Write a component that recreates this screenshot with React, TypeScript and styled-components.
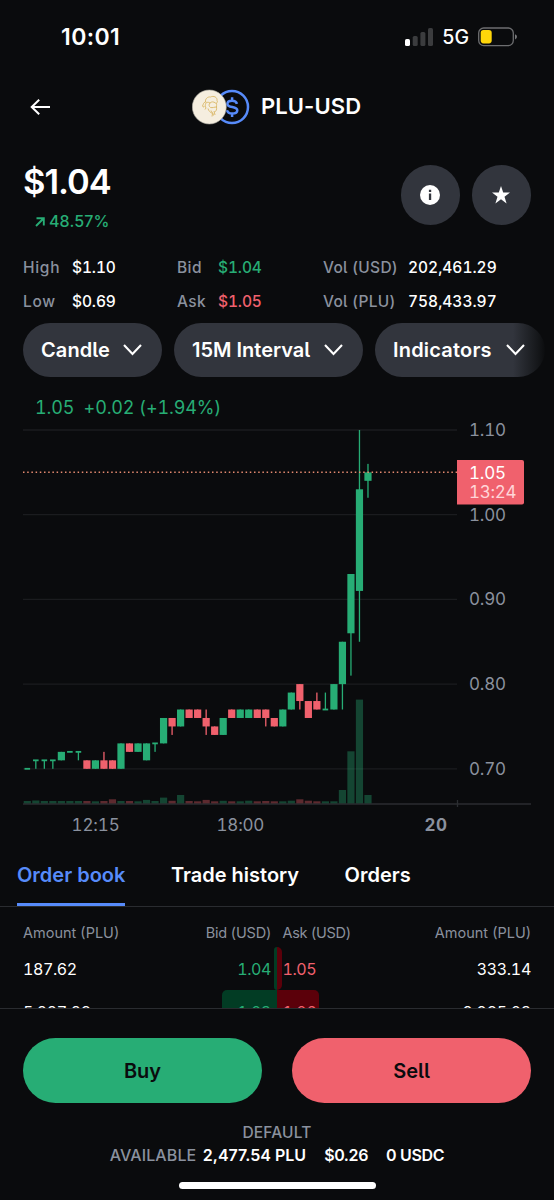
import React from "react";
import styled, { createGlobalStyle } from "styled-components";

const c = {
  bg: "#0a0b0d",
  fg: "#ffffff",
  muted: "#8a919e",
  green: "#27ad75",
  red: "#f0616d",
  blue: "#578bfa",
  pill: "#32353d",
  divider: "#2a2c30",
};

const Global = createGlobalStyle`
  * { box-sizing: border-box; }
  body { margin: 0; background: ${c.bg}; }
  button { border: 0; padding: 0; font: inherit; color: inherit; background: none; }
`;

const Screen = styled.main`
  width: 554px;
  height: 1200px;
  overflow: hidden;
  display: flex;
  flex-direction: column;
  background: ${c.bg};
  color: ${c.fg};
  font-family: Inter, "Liberation Sans", sans-serif;
  font-feature-settings: "cv05";
`;

const Text = styled.span<{ $size: number; $weight?: number; $color?: string; $ls?: number; $tabular?: boolean }>`
  font-size: ${(p) => p.$size}px;
  font-weight: ${(p) => p.$weight ?? 500};
  color: ${(p) => p.$color ?? c.fg};
  letter-spacing: ${(p) => p.$ls ?? 0}px;
  font-variant-numeric: ${(p) => (p.$tabular ? "tabular-nums" : "normal")};
  line-height: 1.2;
  white-space: pre;
`;

const StatusBar = styled.div`
  height: 75px;
  padding: 0 37px 0 61px;
  display: flex;
  align-items: center;
  justify-content: space-between;
`;

const StatusIcons = styled.div`
  display: flex;
  align-items: center;
  gap: 9px;
`;

const Header = styled.header`
  height: 65px;
  padding: 0 29px 2px;
  display: grid;
  grid-template-columns: 163px auto 1fr;
  align-items: center;
`;

const BackButton = styled.button`
  width: 22px;
  height: 18px;
`;

const Pair = styled.div`
  display: flex;
  align-items: center;
  gap: 11px;
`;

const PriceSection = styled.section`
  height: 110px;
  padding: 25px 23px 0;
  display: flex;
  justify-content: space-between;
`;

const PriceColumn = styled.div`
  display: flex;
  flex-direction: column;
  margin-top: -4px;
`;

const Change = styled.div`
  display: flex;
  align-items: center;
  gap: 4px;
  margin: 10px 0 0 12px;
`;

const Actions = styled.div`
  display: flex;
  gap: 11.5px;
`;

const RoundButton = styled.button`
  width: 59.5px;
  height: 59.5px;
  border-radius: 50%;
  background: ${c.pill};
  display: flex;
  align-items: center;
  justify-content: center;
`;

const Stats = styled.section`
  height: 73px;
  padding: 1px 23px 0;
  display: grid;
  grid-template-columns: 49px 105px 41px 105px 85px 1fr;
  grid-auto-rows: 34px;
  align-items: center;
`;

const Pills = styled.nav`
  height: 54px;
  margin-left: 23px;
  display: flex;
  gap: 12px;
`;

const Pill = styled.button<{ $width: number; $fade?: boolean }>`
  width: ${(p) => p.$width}px;
  flex: none;
  height: 54px;
  border-radius: 27px;
  padding: 0 20px 0 18px;
  display: flex;
  align-items: center;
  justify-content: space-between;
  background: ${(p) =>
    p.$fade ? `linear-gradient(to right, ${c.pill} 138px, #15171a 163px, ${c.bg} 171px)` : c.pill};
`;

const Legend = styled.div`
  height: 43px;
  padding: 20px 0 0 35px;
`;

const ChartSvg = styled.svg`
  display: block;
  flex: none;
  font-family: Inter, "Liberation Sans", sans-serif;
  font-variant-numeric: tabular-nums;
`;

const Tabs = styled.nav`
  height: 67px;
  flex: none;
  padding-left: 17px;
  display: flex;
  gap: 45.5px;
  border-bottom: 1px solid ${c.divider};
`;

const Tab = styled.button<{ $active?: boolean }>`
  height: 66px;
  padding-top: 6px;
  border-bottom: 3px solid ${(p) => (p.$active ? c.blue : "transparent")};
`;

const Book = styled.section`
  height: 101px;
  flex: none;
  overflow: hidden;
  padding-top: 12px;
`;

const BookRow = styled.div<{ $h: number }>`
  height: ${(p) => p.$h}px;
  padding: 0 23px;
  display: grid;
  grid-template-columns: 1fr 1fr;
`;

const Side = styled.div<{ $ask?: boolean }>`
  display: flex;
  align-items: center;
  justify-content: space-between;
  padding: ${(p) => (p.$ask ? "0 0 0 5.5px" : "0 6px 0 0")};
`;

/* The depth bar sits behind the row's figures, growing outward from the centre. */
const Depth = styled(Side)<{ $w: number }>`
  position: relative;
  z-index: 0;
  padding-top: 2px;
  &::before {
    content: "";
    position: absolute;
    z-index: -1;
    top: 0;
    bottom: 0;
    ${(p) => (p.$ask ? "left" : "right")}: 0;
    width: ${(p) => p.$w}px;
    background: ${(p) => (p.$ask ? "#5b000a" : "#023c24")};
    border-radius: ${(p) => (p.$ask ? "0 5px 5px 0" : "5px 0 0 5px")};
  }
`;

const Footer = styled.footer`
  flex: 1;
  border-top: 1px solid ${c.divider};
  padding-top: 29px;
  display: flex;
  flex-direction: column;
  align-items: center;
`;

const TradeButtons = styled.div`
  width: 508px;
  display: grid;
  grid-template-columns: 1fr 1fr;
  gap: 30px;
  margin-bottom: 19px;
`;

const TradeButton = styled.button<{ $bg: string }>`
  height: 65px;
  border-radius: 33px;
  background: ${(p) => p.$bg};
`;

const Balance = styled.div`
  height: 22.5px;
  display: flex;
  align-items: center;
  gap: 6.5px;
`;

const BalanceValues = styled.div`
  display: flex;
  gap: 18px;
`;

const HomeBar = styled.div`
  width: 197px;
  height: 7px;
  border-radius: 4px;
  background: #fff;
  margin-top: 15px;
`;

const Signal = () => (
  <svg width="28" height="18" viewBox="0 0 28 18">
    <rect x="0" y="11" width="5" height="7" rx="1.6" fill="#fff" />
    <rect x="7.7" y="8" width="5" height="10" rx="1.6" fill="#3b3c3e" />
    <rect x="15.4" y="4" width="5" height="14" rx="1.6" fill="#3b3c3e" />
    <rect x="23" y="0" width="5" height="18" rx="1.6" fill="#3b3c3e" />
  </svg>
);

const Battery = () => (
  <svg width="39" height="20" viewBox="0 0 39 20">
    <rect x=".7" y="1" width="34.6" height="17.6" rx="5" fill="none" stroke="#6d6e70" strokeWidth="1.3" />
    <rect x="2.7" y="3" width="11" height="13.4" rx="2.8" fill="#ffd60a" />
    <path d="M37 7.2q2 .8 2 2.6t-2 2.6z" fill="#77787a" />
  </svg>
);

const BackArrow = () => (
  <svg width="22" height="18" viewBox="0 0 22 18" fill="none" stroke="#fff" strokeWidth="2">
    <path d="M21 9H2.5M10.2 1.8 2.7 9l7.5 7.2" />
  </svg>
);

const Coins = () => (
  <svg width="58" height="36" viewBox="0 0 58 36">
    <circle cx="40" cy="18" r="16" fill={c.bg} stroke={c.blue} strokeWidth="2.5" />
    <path
      d="M45 14.800c-.6-2-2.400-3.100-4.900-3.100-2.800 0-4.700 1.200-4.700 3.200 0 4.400 9.900 1.900 9.900 6.400 0 2-2 3.300-5.100 3.300-2.800 0-4.700-1.200-5.200-3.300M40.100 8.300v3.200M40.100 24.800v3.200"
      fill="none"
      stroke={c.blue}
      strokeWidth="2.500"
    />
    <circle cx="17.300" cy="18" r="17" fill="#f5eedf" stroke="#aaa79f" strokeWidth=".6" />
    <g fill="none" stroke="#d9b765" strokeWidth=".9">
      <path d="M13.500 13c-.5-3 2-5.500 5-5 3-1.500 7 0 6.500 3.500 1 1.500 0 3-1.500 2.500-2-1.500-4-1.500-5.500 0-2-1.500-4 0-4.500-1z" />
      <path d="M13.500 13c-2.500.5-2 2.500-3 4 .5 1.500 1.500 1 2 0M14 14c-1 2-1 3.500 0 5l-1 1.500M18 14c-1.500 1.500-1 3.500.5 4.500 2 .5 4-.5 6-.5 0-2 .5-3-.5-4M24.500 18c.5 2.500-.5 4.500-2 5M16 19.500c.5 2.500 2.500 4 4.500 5l-.5 3M19 21.500c1 2 2.500 3 2.500 5M22 22l1 4" />
    </g>
  </svg>
);

const InfoIcon = () => (
  <svg width="20" height="20" viewBox="0 0 20 20">
    <circle cx="10" cy="10" r="10" fill="#fff" />
    <path d="M8.900 4.800h2.300V7H8.900zM8.900 8.500h2.300v6.500H8.900z" fill={c.pill} />
  </svg>
);

const StarIcon = () => (
  <svg width="18" height="18" viewBox="0 0 18 18">
    <path d="M9 0l2.200 6.600H18l-5.500 4.100 2.100 6.700L9 13.300l-5.600 4.100 2.100-6.700L0 6.600h6.800z" fill="#fff" />
  </svg>
);

const TrendArrow = () => (
  <svg width="10" height="10" viewBox="0 0 10 10" fill="none" stroke={c.green} strokeWidth="1.900">
    <path d="M1 9l7-7M1.500 1.200H8.800V8.500" />
  </svg>
);

const Chevron = () => (
  <svg width="19" height="12" viewBox="0 0 19 12" fill="none" stroke="#fff" strokeWidth="2.100">
    <path d="M1 1l8.500 9L18 1" />
  </svg>
);

// [open, close, high, low, volume height]; prices are in cents
type Candle = [number, number, number, number, number];
const candles: Candle[] = [
  [70, 70, 70, 70, 2.3], [71, 71, 71, 70, 2.8], [71, 71, 71, 70, 2.3], [71, 71, 71, 70, 2.3],
  [71, 72, 72, 71, 2.3], [72, 72, 72, 72, 2.3], [72, 72, 72, 71, 2.3], [71, 70, 71, 70, 2.3],
  [70, 71, 71, 70, 2], [71, 70, 72, 70, 2.3], [71, 70, 71, 70, 4], [70, 73, 73, 70, 2.3],
  [73, 72, 73, 72, 2.3], [72, 73, 73, 72, 2], [71, 73, 73, 71, 3.4], [73, 73, 73, 72, 2.3],
  [73, 76, 76, 73, 5.7], [76, 75, 76, 74, 2.5], [75, 77, 77, 75, 8.3], [77, 76, 77, 76, 2.3],
  [77, 76, 77, 76, 2], [76, 75, 77, 74, 3.4], [75, 74, 75, 74, 2], [74, 76, 76, 74, 2.5],
  [77, 76, 77, 76, 2], [76, 77, 77, 76, 2], [76, 77, 77, 76, 2.6], [77, 76, 77, 76, 2],
  [77, 76, 77, 75, 2.3], [76, 75, 76, 75, 2], [75, 77, 77, 75, 2], [77, 79, 79, 77, 2.6],
  [80, 78, 80, 77, 4], [78, 76, 78, 76, 2.6], [78, 77, 79, 77, 2], [77, 77, 79, 77, 2],
  [77, 80, 80, 77, 2], [80, 85, 85, 77, 13.3], [86, 93, 93, 81, 52], [91, 103, 110, 85, 103.7],
  [104, 105, 106, 102, 8.3],
];

const priceY = (cents: number) => 10 + (110 - cents) * 8.47;
const BASE = 383.3;

const Chart = () => (
  <ChartSvg width="554" height="420" viewBox="0 0 554 420">
    {[110, 100, 90, 80, 70].map((p) => (
      <g key={p}>
        <path d={`M23 ${priceY(p)}H457`} stroke="#1b1c1f" strokeWidth="1.300" />
        <text x="469" y={priceY(p) + 6} fontSize="17" letterSpacing="-.2" fill={c.muted}>
          {(p / 100).toFixed(2)}
        </text>
      </g>
    ))}
    <path d={`M23 ${BASE + 0.7}H531M457.500 380v7`} stroke="#2b2d31" strokeWidth="1.300" />
    {candles.map(([open, close, high, low, vol], i) => {
      const x = 27.3 + i * 8.517;
      const fill = close >= open ? c.green : c.red;
      const top = priceY(Math.max(open, close));
      const bottom = priceY(Math.min(open, close));
      const flat = open === close;
      return (
        <g key={i} fill={fill}>
          <rect x={x - 3.6} y={BASE - vol} width="7.200" height={vol} opacity=".36" />
          <rect x={x - 0.65} y={priceY(high)} width="1.300" height={priceY(low) - priceY(high)} />
          <rect
            x={x - (flat ? 2.8 : 3.6)}
            y={flat ? top - 0.9 : top}
            width={flat ? 5.6 : 7.2}
            height={flat ? 1.8 : bottom - top}
          />
        </g>
      );
    })}
    <path d="M23 52.300H457" stroke="#e58a70" strokeWidth="1.500" strokeDasharray="1.500 2.700" />
    <path d="M457 40h65a2 2 0 0 1 2 2v40.500a2 2 0 0 1-2 2h-65z" fill={c.red} />
    <text x="469" y="58.500" fontSize="17" fill="#fff" letterSpacing="-.2">1.05</text>
    <text x="469" y="78" fontSize="17" fill="#ffd5d8" letterSpacing="-.3">13:24</text>
    <g fontSize="17" fill={c.muted}>
      <text x="71.500" y="410.500" letterSpacing="-.1">12:15</text>
      <text x="216.500" y="410.500" letterSpacing="-.2">18:00</text>
      <text x="424.500" y="410.500" fontWeight="700" letterSpacing=".4">20</text>
    </g>
  </ChartSvg>
);

const stats = [
  ["High", "$1.10", c.fg, "Bid", "$1.04", c.green, "Vol (USD)", "202,461.29"],
  ["Low", "$0.69", c.fg, "Ask", "$1.05", c.red, "Vol (PLU)", "758,433.97"],
];

const book = [
  { bidAmount: "187.62", bid: "1.04", ask: "1.05", askAmount: "333.14", bidW: 3.5, askW: 5 },
  { bidAmount: "5,227.28", bid: "1.03", ask: "1.06", askAmount: "9,985.03", bidW: 55, askW: 42 },
];

export default function App() {
  return (
    <Screen>
      <Global />
      <StatusBar>
        <Text $size={23} $weight={600} $ls={0.4}>10:01</Text>
        <StatusIcons>
          <Signal />
          <Text $size={19.5}>5G</Text>
          <Battery />
        </StatusIcons>
      </StatusBar>
      <Header>
        <BackButton aria-label="Back"><BackArrow /></BackButton>
        <Pair>
          <Coins />
          <Text $size={22} $weight={600} $ls={0.1}>PLU-USD</Text>
        </Pair>
      </Header>
      <PriceSection>
        <PriceColumn>
          <Text $size={34.5} $weight={600} $ls={-1}>$1.04</Text>
          <Change>
            <TrendArrow />
            <Text $size={16} $color={c.green} $ls={0.1}>48.57%</Text>
          </Change>
        </PriceColumn>
        <Actions>
          <RoundButton aria-label="Info"><InfoIcon /></RoundButton>
          <RoundButton aria-label="Favorite"><StarIcon /></RoundButton>
        </Actions>
      </PriceSection>
      <Stats>
        {stats.map(([a, av, ac, b, bv, bc, v, vv]) => (
          <React.Fragment key={a}>
            <Text $size={15.5} $color={c.muted} $ls={0.7}>{a}</Text>
            <Text $size={15.5} $color={ac} $tabular $ls={-0.1}>{av}</Text>
            <Text $size={15.5} $color={c.muted} $ls={0.4}>{b}</Text>
            <Text $size={15.5} $color={bc} $tabular $ls={-0.1}>{bv}</Text>
            <Text $size={15.5} $color={c.muted} $ls={0.3}>{v}</Text>
            <Text $size={15.5} $tabular>{vv}</Text>
          </React.Fragment>
        ))}
      </Stats>
      <Pills>
        <Pill $width={139}><Text $size={20} $weight={600} $ls={0.1}>Candle</Text><Chevron /></Pill>
        <Pill $width={189}><Text $size={20} $weight={600}>15M Interval</Text><Chevron /></Pill>
        <Pill $width={170} $fade><Text $size={20} $weight={600} $ls={0.2}>Indicators</Text><Chevron /></Pill>
      </Pills>
      <Legend>
        <Text $size={18} $weight={400} $color={c.green} $tabular $ls={-0.15}>1.05  +0.02 (+1.94%)</Text>
      </Legend>
      <Chart />
      <Tabs>
        <Tab $active><Text $size={20} $weight={600} $color={c.blue}>Order book</Text></Tab>
        <Tab><Text $size={20} $weight={600}>Trade history</Text></Tab>
        <Tab><Text $size={20} $weight={600}>Orders</Text></Tab>
      </Tabs>
      <Book>
        <BookRow $h={28}>
          <Side>
            <Text $size={14.5} $weight={400} $color={c.muted}>Amount (PLU)</Text>
            <Text $size={14.5} $weight={400} $color={c.muted} $ls={-0.2}>Bid (USD)</Text>
          </Side>
          <Side $ask>
            <Text $size={14.5} $weight={400} $color={c.muted} $ls={-0.3}>Ask (USD)</Text>
            <Text $size={14.5} $weight={400} $color={c.muted}>Amount (PLU)</Text>
          </Side>
        </BookRow>
        {book.map((r) => (
          <BookRow $h={43} key={r.bid}>
            <Depth $w={r.bidW}>
              <Text $size={16} $weight={400} $tabular $ls={-0.4}>{r.bidAmount}</Text>
              <Text $size={16} $weight={400} $tabular $ls={-0.4} $color={c.green}>{r.bid}</Text>
            </Depth>
            <Depth $ask $w={r.askW}>
              <Text $size={16} $weight={400} $tabular $ls={-0.4} $color={c.red}>{r.ask}</Text>
              <Text $size={16} $weight={400} $tabular $ls={-0.3}>{r.askAmount}</Text>
            </Depth>
          </BookRow>
        ))}
      </Book>
      <Footer>
        <TradeButtons>
          <TradeButton $bg={c.green}><Text $size={20} $weight={600} $color={c.bg}>Buy</Text></TradeButton>
          <TradeButton $bg={c.red}><Text $size={20} $weight={600} $color={c.bg}>Sell</Text></TradeButton>
        </TradeButtons>
        <Balance>
          <Text $size={15.5} $color={c.muted} $ls={0.2}>DEFAULT</Text>
        </Balance>
        <Balance>
          <Text $size={16} $color={c.muted} $ls={0.1}>AVAILABLE</Text>
          <BalanceValues>
            <Text $size={16} $weight={600}>2,477.54 PLU</Text>
            <Text $size={16} $weight={600} $ls={-0.4}>$0.26</Text>
            <Text $size={16} $weight={600} $ls={-0.3}>0 USDC</Text>
          </BalanceValues>
        </Balance>
        <HomeBar />
      </Footer>
    </Screen>
  );
}
